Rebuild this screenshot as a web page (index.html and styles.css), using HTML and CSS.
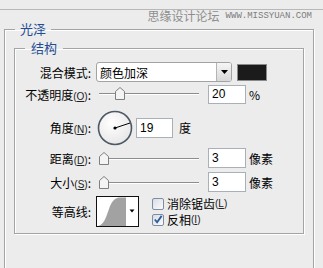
FILE: index.html
```html
<!DOCTYPE html>
<html lang="zh-CN">
<head>
    <meta charset="UTF-8">
    <meta name="viewport" content="width=device-width, initial-scale=1.0">
    <title>光泽 - 图层样式</title>
    <link rel="stylesheet" href="styles.css">
</head>
<body>
    <div class="top">
        <span class="mark-cn">思缘设计论坛</span>
        <span class="mark-en">WWW.MISSYUAN.COM</span>
    </div>
    <fieldset class="group outer">
        <legend>光泽</legend>
        <fieldset class="group inner">
            <legend>结构</legend>

            <div class="row row-blend">
                <span class="lbl">混合模式:</span>
                <div class="select">
                    <span class="select-text">颜色加深</span>
                    <span class="select-btn">
                        <svg width="7" height="4" viewBox="0 0 7 4"><path d="M0 0h7L3.5 4z" fill="#000"/></svg>
                    </span>
                </div>
                <span class="swatch"></span>
            </div>

            <div class="row row-opacity">
                <span class="lbl">不透明度<span class="key">(<u>O</u>)</span>:</span>
                <div class="slider">
                    <svg class="thumb" style="left: 18px" width="10" height="13" viewBox="0 0 10 13"><path d="M0.5 12.5V4.5L5 0.5l4.5 4v8z" fill="#f4f4f4" stroke="#7f7f7f"/></svg>
                </div>
                <div class="num">20</div>
                <span class="unit">%</span>
            </div>

            <div class="row row-angle">
                <span class="lbl">角度<span class="key">(<u>N</u>)</span>:</span>
                <svg class="dial" width="36" height="36" viewBox="0 0 36 36">
                    <defs>
                        <radialGradient id="dialFill" cx="0.4" cy="0.35" r="0.7">
                            <stop offset="0" stop-color="#ffffff"/>
                            <stop offset="1" stop-color="#e6e6e6"/>
                        </radialGradient>
                    </defs>
                    <circle cx="18" cy="18" r="16.5" fill="url(#dialFill)" stroke="#4f5966" stroke-width="1.6"/>
                    <line x1="18" y1="18" x2="33" y2="13" stroke="#000" stroke-width="1"/>
                    <circle cx="18" cy="18" r="1.6" fill="#000"/>
                </svg>
                <div class="num num-angle">19</div>
                <span class="unit">度</span>
            </div>

            <div class="row row-size">
                <span class="lbl">距离<span class="key">(<u>D</u>)</span>:</span>
                <div class="slider">
                    <svg class="thumb" style="left: 2px" width="10" height="13" viewBox="0 0 10 13"><path d="M0.5 12.5V4.5L5 0.5l4.5 4v8z" fill="#f4f4f4" stroke="#7f7f7f"/></svg>
                </div>
                <div class="num">3</div>
                <span class="unit">像素</span>
            </div>

            <div class="row row-size">
                <span class="lbl">大小<span class="key">(<u>S</u>)</span>:</span>
                <div class="slider">
                    <svg class="thumb" style="left: 2px" width="10" height="13" viewBox="0 0 10 13"><path d="M0.5 12.5V4.5L5 0.5l4.5 4v8z" fill="#f4f4f4" stroke="#7f7f7f"/></svg>
                </div>
                <div class="num">3</div>
                <span class="unit">像素</span>
            </div>

            <div class="row row-contour">
                <span class="lbl">等高线:</span>
                <svg class="contour" width="43" height="31" viewBox="0 0 43 31">
                    <rect x="0.5" y="0.5" width="42" height="30" fill="#fff" stroke="#111"/>
                    <path d="M2 30C8 29 10 21 13 13C15 7 18 2 23 1.5H30V30z" fill="#a2a2a2"/>
                    <path d="M33.5 13.5h5l-2.5 3z" fill="#000"/>
                </svg>
                <div class="checks">
                    <label class="check"><span class="box"></span>消除锯齿<span class="key">(<u>L</u>)</span></label>
                    <label class="check"><span class="box checked">
                        <svg width="11" height="11" viewBox="0 0 11 11"><path d="M2 5.5l2.5 3L9.5 1.5" fill="none" stroke="#2b5d9e" stroke-width="2"/></svg>
                    </span>反相<span class="key">(<u>I</u>)</span></label>
                </div>
            </div>
        </fieldset>
    </fieldset>
</body>
</html>
```

FILE: styles.css
```css
body {
    margin: 0;
    width: 323px;
    height: 268px;
    overflow: hidden;
    background: #ececec;
    font-family: "Noto Sans CJK SC", "Liberation Sans", sans-serif;
    font-size: 12px;
    color: #000;
}
.top {
    margin-top: 9px;
    border-top: 1px solid #b8b8b8;
    height: 12px;
    display: flex;
    justify-content: flex-end;
    align-items: center;
    gap: 6px;
    padding-right: 11px;
}
.mark-cn {
    color: #8e8e8e;
    font-size: 12px;
    line-height: 12px;
}
.mark-en {
    font-family: "Liberation Mono", monospace;
    font-size: 9px;
    line-height: 12px;
    color: #7c7c7c;
}
.group {
    box-sizing: border-box;
    border: 1px solid #a4a4a4;
    box-shadow: inset 1px 1px 0 #fff, 1px 1px 0 #fff;
    min-inline-size: 0;
}
.group legend {
    color: #1f4e94;
    font-size: 13px;
    line-height: 14px;
    height: 14px;
}
.outer {
    margin: 0 0 0 4px;
    width: 310px;
    height: 246px;
    padding: 5px 9px 0 9px;
    border-bottom: none;
}
.outer > legend {
    margin-left: 1px;
    padding: 0 5px;
}
.inner {
    margin: 0;
    width: 290px;
    padding: 7px 0 6px 0;
}
.inner > legend {
    margin-left: 10px;
    padding: 0 6px;
}
.row {
    display: flex;
    align-items: center;
}
.lbl {
    flex: none;
    width: 76px;
    margin-right: 5px;
    text-align: right;
    white-space: nowrap;
}
.key {
    font-family: "Liberation Sans", sans-serif;
    font-size: 10px;
    color: #222;
}
.row-blend {
    height: 20px;
}
.row-opacity {
    height: 21px;
    margin-top: 2px;
}
.row-angle {
    height: 37px;
    margin-top: 4px;
}
.row-size {
    height: 20px;
    margin-top: 2px;
}
.row-size + .row-size {
    margin-top: 4px;
}
.row-contour {
    height: 31px;
    margin-top: 4px;
}
.select {
    box-sizing: border-box;
    width: 136px;
    height: 20px;
    border: 1px solid #a3a3a3;
    border-radius: 3px;
    background: #fff;
    display: flex;
    align-items: center;
}
.select-text {
    flex: 1;
    padding-left: 3px;
}
.select-btn {
    box-sizing: border-box;
    width: 15px;
    height: 18px;
    border-left: 1px solid #b4b4b4;
    border-radius: 0 2px 2px 0;
    background: linear-gradient(#f6f6f6, #d8d8d8);
    display: flex;
    align-items: center;
    justify-content: center;
}
.swatch {
    box-sizing: border-box;
    width: 30px;
    height: 17px;
    margin-left: 5px;
    border: 1px solid #8a8a8a;
    background: #1b1b1b;
}
.slider {
    position: relative;
    flex: none;
    width: 102px;
    height: 20px;
    margin-left: 1px;
    margin-right: 9px;
}
.slider::before {
    content: "";
    position: absolute;
    left: 2px;
    right: 0;
    top: 10px;
    height: 1px;
    background: #8c8c8c;
    box-shadow: 0 1px 0 #fff;
}
.thumb {
    position: absolute;
    top: 4px;
}
.row-opacity .slider {
    height: 21px;
}
.row-opacity .thumb {
    top: 3px;
}
.row-opacity .slider::before {
    top: 9px;
}
.num {
    box-sizing: border-box;
    width: 38px;
    height: 20px;
    padding-left: 3px;
    border: 1px solid #aab0b8;
    background: #fff;
    font-family: "Liberation Sans", sans-serif;
    font-size: 12px;
    line-height: 18px;
}
.row-opacity .num {
    height: 19px;
    line-height: 17px;
}
.unit {
    margin-left: 3px;
}
.dial {
    flex: none;
    margin-left: 1px;
}
.num-angle {
    width: 37px;
    margin-left: 3px;
}
.row-angle .unit {
    margin-left: 6px;
}
.contour {
    flex: none;
}
.checks {
    margin-left: 13px;
    display: flex;
    flex-direction: column;
    gap: 2px;
}
.check {
    display: flex;
    align-items: center;
    height: 14px;
}
.box {
    box-sizing: border-box;
    width: 12px;
    height: 12px;
    margin-right: 3px;
    border: 1px solid #7d8ea3;
    border-radius: 2px;
    background: linear-gradient(135deg, #d9dde3, #fbfbfb);
    display: flex;
    align-items: center;
    justify-content: center;
}
```
